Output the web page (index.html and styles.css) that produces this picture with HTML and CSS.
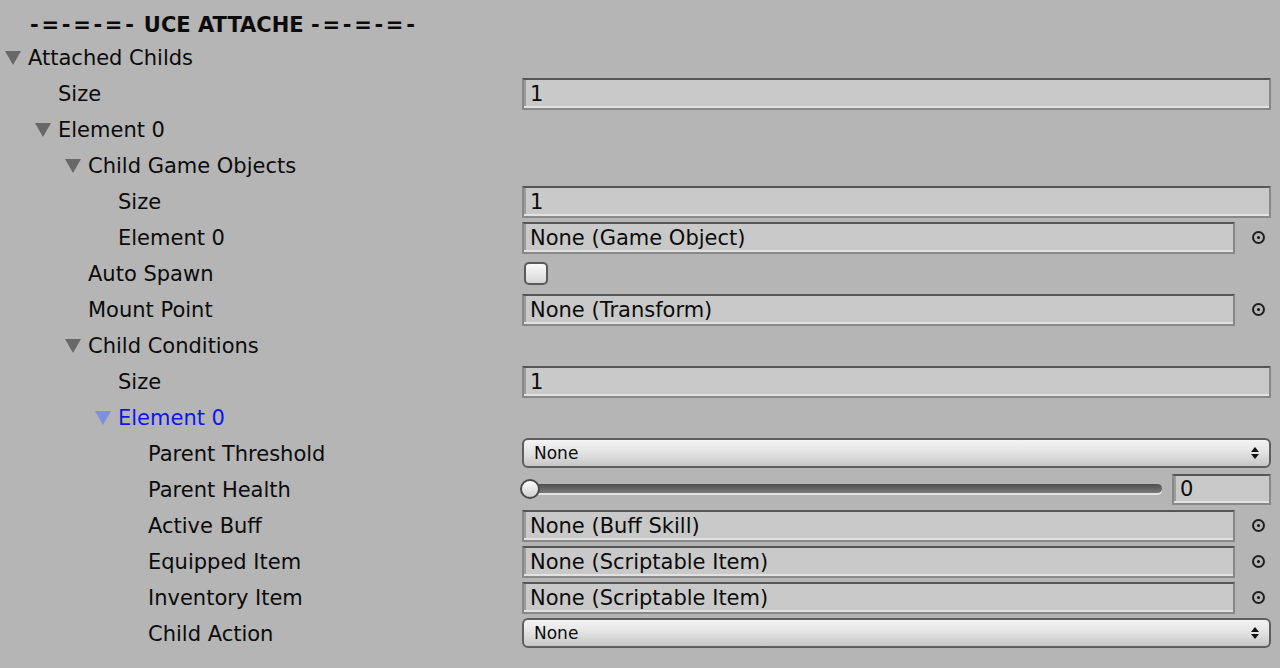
FILE: index.html
```html
<!DOCTYPE html>
<html>
<head>
<meta charset="utf-8">
<link rel="stylesheet" href="styles.css">
</head>
<body>
<div class="inspector">
  <div class="header"><span class="dash">-=-=-=-</span> UCE ATTACHE <span class="dash">-=-=-=-</span></div>

  <div class="row"><div class="label l0"><span class="tri"></span>Attached Childs</div></div>
  <div class="row"><div class="label l1">Size</div><div class="value"><div class="field">1</div></div></div>
  <div class="row"><div class="label l1"><span class="tri"></span>Element 0</div></div>
  <div class="row"><div class="label l2"><span class="tri"></span>Child Game Objects</div></div>
  <div class="row"><div class="label l3">Size</div><div class="value"><div class="field">1</div></div></div>
  <div class="row"><div class="label l3">Element 0</div><div class="value"><div class="field obj">None (Game Object)</div><span class="target"></span></div></div>
  <div class="row"><div class="label l2">Auto Spawn</div><div class="value"><span class="check"></span></div></div>
  <div class="row"><div class="label l2">Mount Point</div><div class="value"><div class="field obj">None (Transform)</div><span class="target"></span></div></div>
  <div class="row"><div class="label l2"><span class="tri"></span>Child Conditions</div></div>
  <div class="row"><div class="label l3">Size</div><div class="value"><div class="field">1</div></div></div>
  <div class="row"><div class="label l3 active"><span class="tri"></span>Element 0</div></div>
  <div class="row"><div class="label l4">Parent Threshold</div><div class="value"><div class="popup">None<span class="arrows"><span class="up"></span><span class="down"></span></span></div></div></div>
  <div class="row"><div class="label l4">Parent Health</div><div class="value"><div class="slider"><span class="track"></span><span class="thumb"></span></div><div class="field num">0</div></div></div>
  <div class="row"><div class="label l4">Active Buff</div><div class="value"><div class="field obj">None (Buff Skill)</div><span class="target"></span></div></div>
  <div class="row"><div class="label l4">Equipped Item</div><div class="value"><div class="field obj">None (Scriptable Item)</div><span class="target"></span></div></div>
  <div class="row"><div class="label l4">Inventory Item</div><div class="value"><div class="field obj">None (Scriptable Item)</div><span class="target"></span></div></div>
  <div class="row"><div class="label l4">Child Action</div><div class="value"><div class="popup">None<span class="arrows"><span class="up"></span><span class="down"></span></span></div></div></div>
</div>
</body>
</html>
```

FILE: styles.css
```css
html, body {
  margin: 0;
  padding: 0;
  background: #b5b5b5;
}
body {
  width: 1280px;
  height: 668px;
  overflow: hidden;
  font-family: "DejaVu Sans", "Liberation Sans", sans-serif;
  font-size: 21px;
  color: #0b0b0b;
}
.inspector {
  padding-top: 8px;
}
.header {
  height: 27px;
  line-height: 27px;
  padding-top: 4px;
  padding-left: 30px;
  font-weight: bold;
  white-space: nowrap;
}
.dash {
  letter-spacing: 2.7px;
}
.row {
  height: 36px;
  display: flex;
  align-items: center;
}
.label {
  width: 522px;
  flex: none;
  display: flex;
  align-items: center;
  white-space: nowrap;
  box-sizing: border-box;
  padding-top: 2px;
}
.l0 { padding-left: 28px; }
.l1 { padding-left: 58px; }
.l2 { padding-left: 88px; }
.l3 { padding-left: 118px; }
.l4 { padding-left: 148px; }
.tri {
  width: 0;
  height: 0;
  margin-left: -23px;
  margin-right: 7px;
  border-left: 8px solid transparent;
  border-right: 8px solid transparent;
  border-top: 14px solid #686868;
}
.active { color: #0d16ef; }
.active .tri { border-top-color: #7f8fe4; }

.value {
  flex: 1;
  display: flex;
  align-items: center;
  padding-right: 9px;
}
.field {
  flex: 1;
  height: 32px;
  box-sizing: border-box;
  background: #c9c9c9;
  border: 2px solid #888;
  border-top-color: #555;
  box-shadow: inset 0 -2px 0 #e2e2e2, inset 2px 0 0 #9c9c9c;
  padding-left: 6px;
  line-height: 28px;
  white-space: nowrap;
  margin-top: 1px;
}
.field.obj {
  flex: none;
  width: 713px;
}
.field.num {
  flex: none;
  width: 99px;
  margin-left: 10px;
  height: 31px;
  line-height: 27px;
}
.target {
  width: 13px;
  height: 13px;
  box-sizing: border-box;
  border: 2px solid #1e1e1e;
  border-radius: 50%;
  margin-left: 17px;
  display: flex;
  align-items: center;
  justify-content: center;
}
.target::after {
  content: "";
  width: 3px;
  height: 3px;
  background: #111;
  border-radius: 50%;
}
.check {
  width: 24px;
  height: 23px;
  box-sizing: border-box;
  margin-left: 2px;
  border: 2px solid #5a5a5a;
  border-radius: 5px;
  background: linear-gradient(#fbfbfb, #d6d6d6);
  margin-top: 1px;
}
.popup {
  flex: 1;
  height: 30px;
  box-sizing: border-box;
  border: 2px solid #5e5e5e;
  border-radius: 6px;
  background: linear-gradient(#f4f4f4, #e2e2e2 50%, #c6c6c6);
  font-size: 17px;
  line-height: 26px;
  padding-left: 10px;
  display: flex;
  align-items: center;
  justify-content: space-between;
  padding-right: 10px;
}
.arrows {
  display: flex;
  flex-direction: column;
  align-items: center;
  gap: 2px;
}
.up, .down {
  width: 0;
  height: 0;
  border-left: 4px solid transparent;
  border-right: 4px solid transparent;
}
.up { border-bottom: 5px solid #111; }
.down { border-top: 5px solid #111; }
.slider {
  flex: 1;
  height: 22px;
  position: relative;
  display: flex;
  align-items: center;
}
.track {
  flex: 1;
  height: 9px;
  margin-left: 8px;
  border-radius: 5px;
  background: linear-gradient(#4e4e4e, #7a7a7a);
  box-shadow: 0 2px 0 #e4e4e4;
  margin-top: -1px;
}
.thumb {
  position: absolute;
  left: -2px;
  top: 1px;
  width: 20px;
  height: 20px;
  box-sizing: border-box;
  border: 2px solid #4a4a4a;
  border-radius: 50%;
  background: linear-gradient(#fdfdfd, #cfcfcf);
}
```
